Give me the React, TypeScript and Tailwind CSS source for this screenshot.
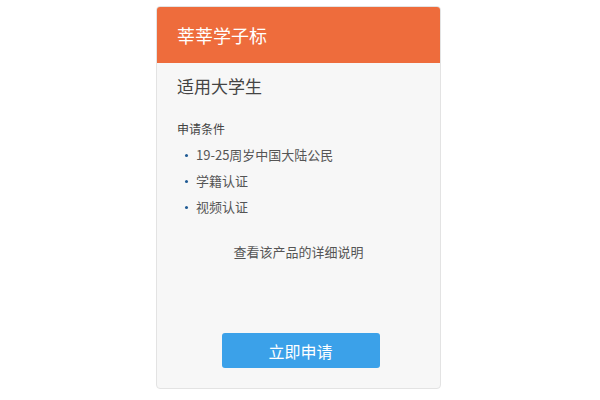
const conditions = ["19-25周岁中国大陆公民", "学籍认证", "视频认证"]

export default function App() {
  return (
    <div
      className="w-[600px] h-[400px] bg-white pt-[6px]"
      style={{ fontFamily: '"Microsoft YaHei", "Noto Sans CJK SC", sans-serif' }}
    >
      <div className="ml-[156px] w-[285px] h-[383px] flex flex-col rounded-[4px] border border-[#e3e3e3] bg-[#f7f7f7] overflow-hidden">
        <div className="h-[56px] bg-[#ee6c3c] flex items-center pl-[20px] text-white text-[18px]">
          莘莘学子标
        </div>
        <div className="pl-[20px] pt-[11px] text-[17px] text-[#444] leading-[24px]">适用大学生</div>
        <div className="pl-[20px] mt-[23px] text-[12px] text-[#444] leading-[16px]">申请条件</div>
        <ul className="mt-[9px] pl-[28px] flex flex-col gap-[8px]">
          {conditions.map((c) => (
            <li key={c} className="flex items-center text-[13px] text-[#555] leading-[18px]">
              <span className="w-[3px] h-[3px] rounded-full bg-[#1f5a94] mr-[8px]" />
              {c}
            </li>
          ))}
        </ul>
        <div className="mt-[27px] text-center text-[13px] text-[#555] leading-[18px]">查看该产品的详细说明</div>
        <div className="flex-1" />
        <div className="flex justify-center mb-[20px]">
          <button className="w-[158px] h-[35px] ml-[4px] rounded-[3px] bg-[#3ba1e9] text-white text-[16px]">
            立即申请
          </button>
        </div>
      </div>
    </div>
  )
}
